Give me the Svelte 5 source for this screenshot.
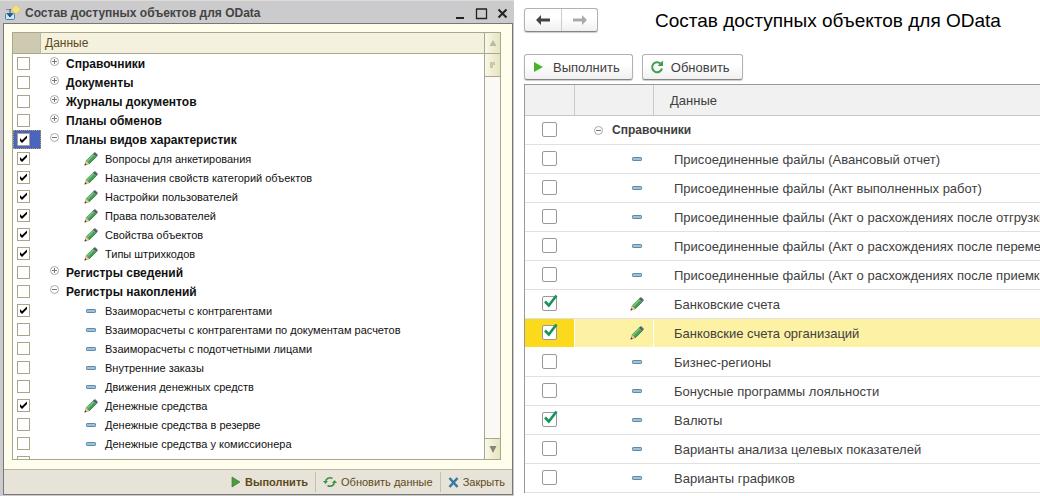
<script lang="ts">
  type Icon = 'plus' | 'minus' | 'pencil' | 'dash';
  type Row = { name: string; icon: Icon; checked: boolean; group?: boolean; selected?: boolean };

  const group = (name: string, icon: Icon, checked = false, selected = false): Row => ({ name, icon, checked, selected, group: true });
  const leaf = (name: string, icon: Icon, checked = false, selected = false): Row => ({ name, icon, checked, selected });

  let classicRows = $state<Row[]>([
    group('Справочники', 'plus'),
    group('Документы', 'plus'),
    group('Журналы документов', 'plus'),
    group('Планы обменов', 'plus'),
    group('Планы видов характеристик', 'minus', true, true),
    leaf('Вопросы для анкетирования', 'pencil', true),
    leaf('Назначения свойств категорий объектов', 'pencil', true),
    leaf('Настройки пользователей', 'pencil', true),
    leaf('Права пользователей', 'pencil', true),
    leaf('Свойства объектов', 'pencil', true),
    leaf('Типы штрихкодов', 'pencil', true),
    group('Регистры сведений', 'plus'),
    group('Регистры накоплений', 'minus'),
    leaf('Взаиморасчеты с контрагентами', 'dash', true),
    leaf('Взаиморасчеты с контрагентами по документам расчетов', 'dash'),
    leaf('Взаиморасчеты с подотчетными лицами', 'dash'),
    leaf('Внутренние заказы', 'dash'),
    leaf('Движения денежных средств', 'dash'),
    leaf('Денежные средства', 'pencil', true),
    leaf('Денежные средства в резерве', 'dash'),
    leaf('Денежные средства у комиссионера', 'dash'),
    leaf('Доходы', 'dash')
  ]);

  let taxiRows = $state<Row[]>([
    group('Справочники', 'minus'),
    leaf('Присоединенные файлы (Авансовый отчет)', 'dash'),
    leaf('Присоединенные файлы (Акт выполненных работ)', 'dash'),
    leaf('Присоединенные файлы (Акт о расхождениях после отгрузки)', 'dash'),
    leaf('Присоединенные файлы (Акт о расхождениях после перемещения)', 'dash'),
    leaf('Присоединенные файлы (Акт о расхождениях после приемки)', 'dash'),
    leaf('Банковские счета', 'pencil', true),
    leaf('Банковские счета организаций', 'pencil', true, true),
    leaf('Бизнес-регионы', 'dash'),
    leaf('Бонусные программы лояльности', 'dash'),
    leaf('Валюты', 'dash', true),
    leaf('Варианты анализа целевых показателей', 'dash'),
    leaf('Варианты графиков', 'dash')
  ]);
</script>

{#snippet rowIcon(icon: Icon)}
  {#if icon === 'pencil'}
    <svg class="icon" width="14" height="14" viewBox="0 0 14 14" aria-hidden="true">
      <path d="M.8 13.2l1.4-4.6 3.2 3.2z" fill="#ecc99a" stroke="#b08a5c" stroke-width=".5" />
      <path d="M.5 13.5l.7-2.2 1.500 1.500z" fill="#3b2f2b" />
      <path d="M2 8.600L8.800 1.800l3.400 3.400-6.800 6.800z" fill="#48a058" />
      <path d="M3.200 9.200l6.600-6.600" stroke="#7cc47c" stroke-width="1.400" />
      <path d="M5.200 11.600l6.800-6.600" stroke="#37804a" stroke-width=".9" />
      <path d="M8.800 1.800L10.200.5q.7-.5 1.300 0l2 2q.5.600 0 1.300l-1.300 1.400z" fill="#56636b" />
    </svg>
  {:else if icon === 'dash'}
    <svg class="icon" width="14" height="14" viewBox="0 0 14 14" aria-hidden="true">
      <rect x="2.5" y="5.5" width="9" height="3" rx=".6" fill="#9dc3d8" stroke="#6389a8" />
    </svg>
  {:else}
    <svg class="icon toggle" width="9" height="9" viewBox="0 0 9 9" aria-hidden="true">
      <circle cx="4.5" cy="4.5" r="4" fill="none" stroke="#a9a9a9" />
      <path d={icon === 'plus' ? 'M2 4.5h5M4.5 2v5' : 'M2 4.5h5'} stroke="#777" />
    </svg>
  {/if}
{/snippet}

<div class="page">
  <section class="classic">
    <header class="titlebar">
      <svg width="16" height="16" viewBox="0 0 16 16" aria-hidden="true">
        <rect x=".5" y="8.5" width="9" height="6" rx="1" fill="#cfe3f2" stroke="#4d7da5" />
        <path d="M5 4v7M2.500 9L5 12 7.500 9z" fill="#28587f" stroke="#28587f" />
        <path d="M1.500 4.500H8" stroke="#444" stroke-dasharray="1 1" />
        <path d="M11 0l4.500 4.500L11 9 6.500 4.500z" fill="#f8e476" stroke="#e0c44a" stroke-width=".6" />
      </svg>
      <h2>Состав доступных объектов для OData</h2>
      <div class="window-buttons">
        <button type="button" aria-label="Свернуть">
          <svg width="11" height="11" viewBox="0 0 11 11"><path d="M1 10h8" stroke="#222" stroke-width="2" /></svg>
        </button>
        <button type="button" aria-label="Развернуть">
          <svg width="11" height="11" viewBox="0 0 11 11"><path d="M.5 1v9.500h10V1M0 1h11" fill="none" stroke="#222" stroke-width="1.300" /></svg>
        </button>
        <button type="button" aria-label="Закрыть окно">
          <svg width="11" height="11" viewBox="0 0 11 11"><path d="M1.500 1.500l8 8M9.500 1.500l-8 8" stroke="#222" stroke-width="2" /></svg>
        </button>
      </div>
    </header>

    <div class="classic-frame">
      <div class="classic-body">
        <div class="classic-list">
          <div class="classic-view">
            <table class="classic-table">
              <thead>
                <tr><th class="pick"></th><th>Данные</th></tr>
              </thead>
              <tbody>
                {#each classicRows as row, i}
                  <tr>
                    <td class="pick" class:selected={row.selected}>
                      <label class="check">
                        <input type="checkbox" bind:checked={row.checked} aria-labelledby="classic-{i}" />
                        {#if row.checked}
                          <svg width="13" height="13" viewBox="0 0 13 13" aria-hidden="true">
                            <path d="M3 5v3l2 2 5-5V2.500L5 7.200z" fill="#000" />
                          </svg>
                        {/if}
                      </label>
                    </td>
                    <td>
                      <div class="item" class:group={row.group}>
                        {@render rowIcon(row.icon)}
                        <span id="classic-{i}">{row.name}</span>
                      </div>
                    </td>
                  </tr>
                {/each}
              </tbody>
            </table>
          </div>
          <div class="scrollbar">
            <button type="button" class="up" aria-label="Вверх">
              <svg width="8" height="8" viewBox="0 0 8 8"><path d="M4 1l3.500 6h-7z" fill="#bbb9a2" /></svg>
            </button>
            <div class="thumb">
              <svg width="6" height="6" viewBox="0 0 6 6" aria-hidden="true"><path d="M0 0h5v3H3v3H0z" fill="#cbc8a4" /></svg>
            </div>
            <button type="button" class="down" aria-label="Вниз">
              <svg width="8" height="8" viewBox="0 0 8 8"><path d="M.5 1h7L4 8z" fill="#858475" /></svg>
            </button>
          </div>
        </div>
      </div>

      <footer class="classic-actions">
        <button type="button" class="default">
          <svg width="10" height="12" viewBox="0 0 10 12" aria-hidden="true"><path d="M1 1l8 5-8 5z" fill="#4b9b42" stroke="#367d38" stroke-width=".7" /></svg>
          Выполнить
        </button>
        <button type="button">
          <svg width="14" height="12" viewBox="0 0 14 12" aria-hidden="true">
            <path d="M2.500 6A4.500 4.500 0 0 1 9.500 2.500M11.500 6A4.500 4.500 0 0 1 4.500 9.500" fill="none" stroke="#3e9145" stroke-width="1.600" />
            <path d="M0 5h5L2.500 8zM9 7h5L11.500 4z" fill="#3e9145" />
          </svg>
          Обновить данные
        </button>
        <button type="button">
          <svg width="11" height="11" viewBox="0 0 11 11" aria-hidden="true"><path d="M1.500 1l8 9M9.500 1l-8 9" stroke="#3c78a0" stroke-width="2.600" /></svg>
          Закрыть
        </button>
      </footer>
    </div>
  </section>

  <main class="taxi">
    <header class="taxi-head">
      <nav class="history">
        <button type="button" aria-label="Назад">
          <svg width="14" height="10" viewBox="0 0 14 10"><path d="M0 5l5-5v3.500h9v3H5V10z" fill="#444" /></svg>
        </button>
        <button type="button" aria-label="Вперед">
          <svg width="14" height="10" viewBox="0 0 14 10"><path d="M14 5L9 0v3.500H0v3h9V10z" fill="#aaa" /></svg>
        </button>
      </nav>
      <h1>Состав доступных объектов для OData</h1>
    </header>

    <div class="commands">
      <button type="button">
        <svg width="12" height="12" viewBox="0 0 12 12" aria-hidden="true"><path d="M1 1l9 5-9 5z" fill="#46b52b" /></svg>
        Выполнить
      </button>
      <button type="button">
        <svg width="12" height="14" viewBox="0 0 12 14" aria-hidden="true">
          <path d="M9.500 3.500A5 5 0 1 0 11 8.500" fill="none" stroke="#3f9f51" stroke-width="2" />
          <path d="M12 .5v5.500H6.500z" fill="#3f9f51" />
        </svg>
        Обновить
      </button>
    </div>

    <table class="taxi-table">
      <thead>
        <tr><th class="pick"></th><th class="state"></th><th>Данные</th></tr>
      </thead>
      <tbody>
        {#each taxiRows as row, i}
          <tr class:selected={row.selected}>
            <td class="pick">
              <label class="check">
                <input type="checkbox" bind:checked={row.checked} aria-labelledby="taxi-{i}" />
                {#if row.checked}
                  <svg width="15" height="15" viewBox="0 0 15 15" aria-hidden="true">
                    <path d="M3 5.500L6.800 9.500 14.500-.5" fill="none" stroke="#16925a" stroke-width="2.600" />
                  </svg>
                {/if}
              </label>
            </td>
            {#if row.group}
              <td colspan="2">
                <div class="item group">
                  {@render rowIcon(row.icon)}
                  <span id="taxi-{i}">{row.name}</span>
                </div>
              </td>
            {:else}
              <td class="state">{@render rowIcon(row.icon)}</td>
              <td class="name" id="taxi-{i}">{row.name}</td>
            {/if}
          </tr>
        {/each}
      </tbody>
    </table>
  </main>
</div>

<style>
  :global(body) {
    margin: 0;
    background: #fff;
  }

  .page {
    display: grid;
    grid-template-columns: minmax(0, 514fr) minmax(0, 526fr);
    height: 100vh;
    overflow: hidden;
    font-family: "Liberation Sans", Arial, sans-serif;
    font-size: 11px;
    color: #111;
  }

  h1,
  h2 {
    margin: 0;
    font-weight: normal;
  }

  button {
    display: flex;
    align-items: center;
    justify-content: center;
    padding: 0;
    border: 0;
    background: none;
    color: inherit;
    font: inherit;
    white-space: nowrap;
  }

  svg {
    display: block;
    flex: none;
    overflow: visible;
  }

  table {
    width: 100%;
    table-layout: fixed;
    border-collapse: separate;
    border-spacing: 0;
  }

  th,
  td {
    box-sizing: border-box;
    padding: 0;
    font-weight: normal;
    text-align: left;
    white-space: nowrap;
  }

  .check {
    display: grid;
    justify-content: center;
  }

  .check input,
  .check svg {
    grid-area: 1 / 1;
  }

  .check svg {
    pointer-events: none;
  }

  .check input {
    box-sizing: border-box;
    appearance: none;
    margin: 0;
    background: #fff;
  }

  .item {
    display: flex;
    align-items: center;
  }

  .item.group {
    font-size: 12px;
    font-weight: bold;
  }

  /* Classic window */
  .classic {
    display: flex;
    flex-direction: column;
    min-height: 0;
    box-sizing: border-box;
    padding: 2px 1px 1px 3px;
    background: #cbcbcd;
    border-top: 1px solid #dedbd2;
  }

  .titlebar {
    display: flex;
    align-items: center;
    gap: 4px;
    height: 20px;
    padding: 0 5px 0 2px;
  }

  .titlebar h2 {
    flex: 1;
    font-size: 12px;
    font-weight: bold;
    color: #444;
    white-space: nowrap;
  }

  .window-buttons {
    display: flex;
    gap: 10px;
  }

  .classic-frame {
    display: flex;
    flex: 1;
    flex-direction: column;
    min-height: 0;
    border: 1px solid #777;
    background: #fffdec;
  }

  .classic-body {
    display: flex;
    flex: 1;
    min-height: 0;
    padding: 8px 11px 9px 8px;
  }

  .classic-list {
    display: flex;
    flex: 1;
    min-width: 0;
    border: 1px solid #aaa88c;
    background: #fff;
  }

  .classic-view {
    flex: 1;
    min-width: 0;
    overflow: hidden;
  }

  .classic-table th {
    height: 21px;
    padding-left: 4px;
    border-bottom: 1px solid #aaa88c;
    background: #f5f1df;
    color: #5d4a18;
    font-size: 12px;
  }

  .classic-table .pick {
    width: 28px;
  }

  .classic-table th.pick {
    border-right: 1px solid #bdb99d;
    background: #cec9b1;
  }

  .classic-table td {
    height: 19px;
  }

  .classic-table td.pick {
    padding-right: 7px;
  }

  .classic-table td.selected {
    background: #4b64bd;
    outline: 1px dotted #b5a55c;
    outline-offset: -1px;
  }

  .classic-table input {
    width: 13px;
    height: 13px;
    border: 1px solid #aaa58a;
  }

  .classic-table .item {
    gap: 7px;
    padding-left: 43px;
  }

  .classic-table .item.group {
    padding-left: 9px;
  }

  .classic-table .toggle {
    margin-bottom: 4px;
  }

  .scrollbar {
    display: flex;
    flex-direction: column;
    width: 15px;
    border-left: 1px solid #aaa88c;
    background: #faf9f5;
  }

  .scrollbar .up,
  .scrollbar .down,
  .scrollbar .thumb {
    box-sizing: border-box;
    background: linear-gradient(90deg, #f9f8e8, #e5e4c0);
  }

  .scrollbar .up {
    height: 21px;
    border-bottom: 1px solid #aaa88c;
  }

  .scrollbar .thumb {
    display: flex;
    align-items: center;
    justify-content: center;
    height: 23px;
    border-bottom: 1px solid #aaa88c;
  }

  .scrollbar .down {
    height: 21px;
    margin-top: auto;
    border-top: 1px solid #aaa88c;
  }

  .classic-actions {
    display: flex;
    align-items: center;
    justify-content: flex-end;
    height: 24px;
    border-top: 1px solid #b9b5a2;
    background: #e7e3d9;
  }

  .classic-actions button {
    gap: 4px;
    height: 20px;
    padding: 0 7px;
    color: #5d4a18;
  }

  .classic-actions button + button {
    border-left: 1px solid #c5c0ae;
  }

  .classic-actions .default {
    font-weight: bold;
  }

  /* Taxi form */
  .taxi {
    min-width: 0;
    padding: 8px 0 0 10px;
    color: #404040;
    font-size: 13px;
  }

  .taxi-head {
    display: flex;
    gap: 57px;
  }

  .taxi-head h1 {
    color: #000;
    font-size: 19px;
    line-height: 26px;
    white-space: nowrap;
  }

  .history,
  .commands button {
    box-sizing: border-box;
    border: 1px solid #b2b2b2;
    border-bottom-color: #858585;
    border-radius: 3px;
    background: linear-gradient(#fff 40%, #f0f0f0);
    box-shadow: 0 1px 1px #ccc;
  }

  .history {
    display: flex;
    height: 24px;
  }

  .history button {
    width: 36px;
  }

  .history button + button {
    border-left: 1px solid #ccc;
  }

  .commands {
    display: flex;
    gap: 9px;
    padding: 20px 0 4px;
  }

  .commands button {
    gap: 8px;
    height: 26px;
    padding: 0 12px 0 8px;
  }

  .taxi-table {
    border-top: 1px solid #999;
    border-left: 1px solid #999;
  }

  .taxi-table th {
    height: 31px;
    padding-left: 16px;
    border-bottom: 1px solid #c5c5c5;
    background: #f1f1f1;
  }

  .taxi-table th + th {
    border-left: 1px solid #c9c9c9;
  }

  .taxi-table td {
    height: 29px;
    border-bottom: 1px solid #e0e0e0;
  }

  .taxi-table td.pick {
    padding-bottom: 2px;
  }

  .taxi-table .pick {
    width: 49px;
  }

  .taxi-table .state {
    width: 79px;
  }

  .taxi-table td.state {
    padding-left: 56px;
  }

  .taxi-table .name {
    padding-left: 21px;
    overflow: hidden;
  }

  .taxi-table input {
    width: 15px;
    height: 15px;
    border: 1px solid #999;
    border-radius: 2px;
  }

  .taxi-table .item {
    gap: 9px;
    padding-left: 20px;
  }

  .taxi-table .selected td {
    border-bottom-color: #fff;
    background: #fdf1a4;
  }

  .taxi-table .selected td + td {
    border-left: 1px solid #fff;
  }

  .taxi-table .selected .state {
    padding-left: 55px;
  }

  .taxi-table .selected .name {
    padding-left: 20px;
  }

  .taxi-table .selected .pick {
    background: #fbd91c;
  }
</style>
